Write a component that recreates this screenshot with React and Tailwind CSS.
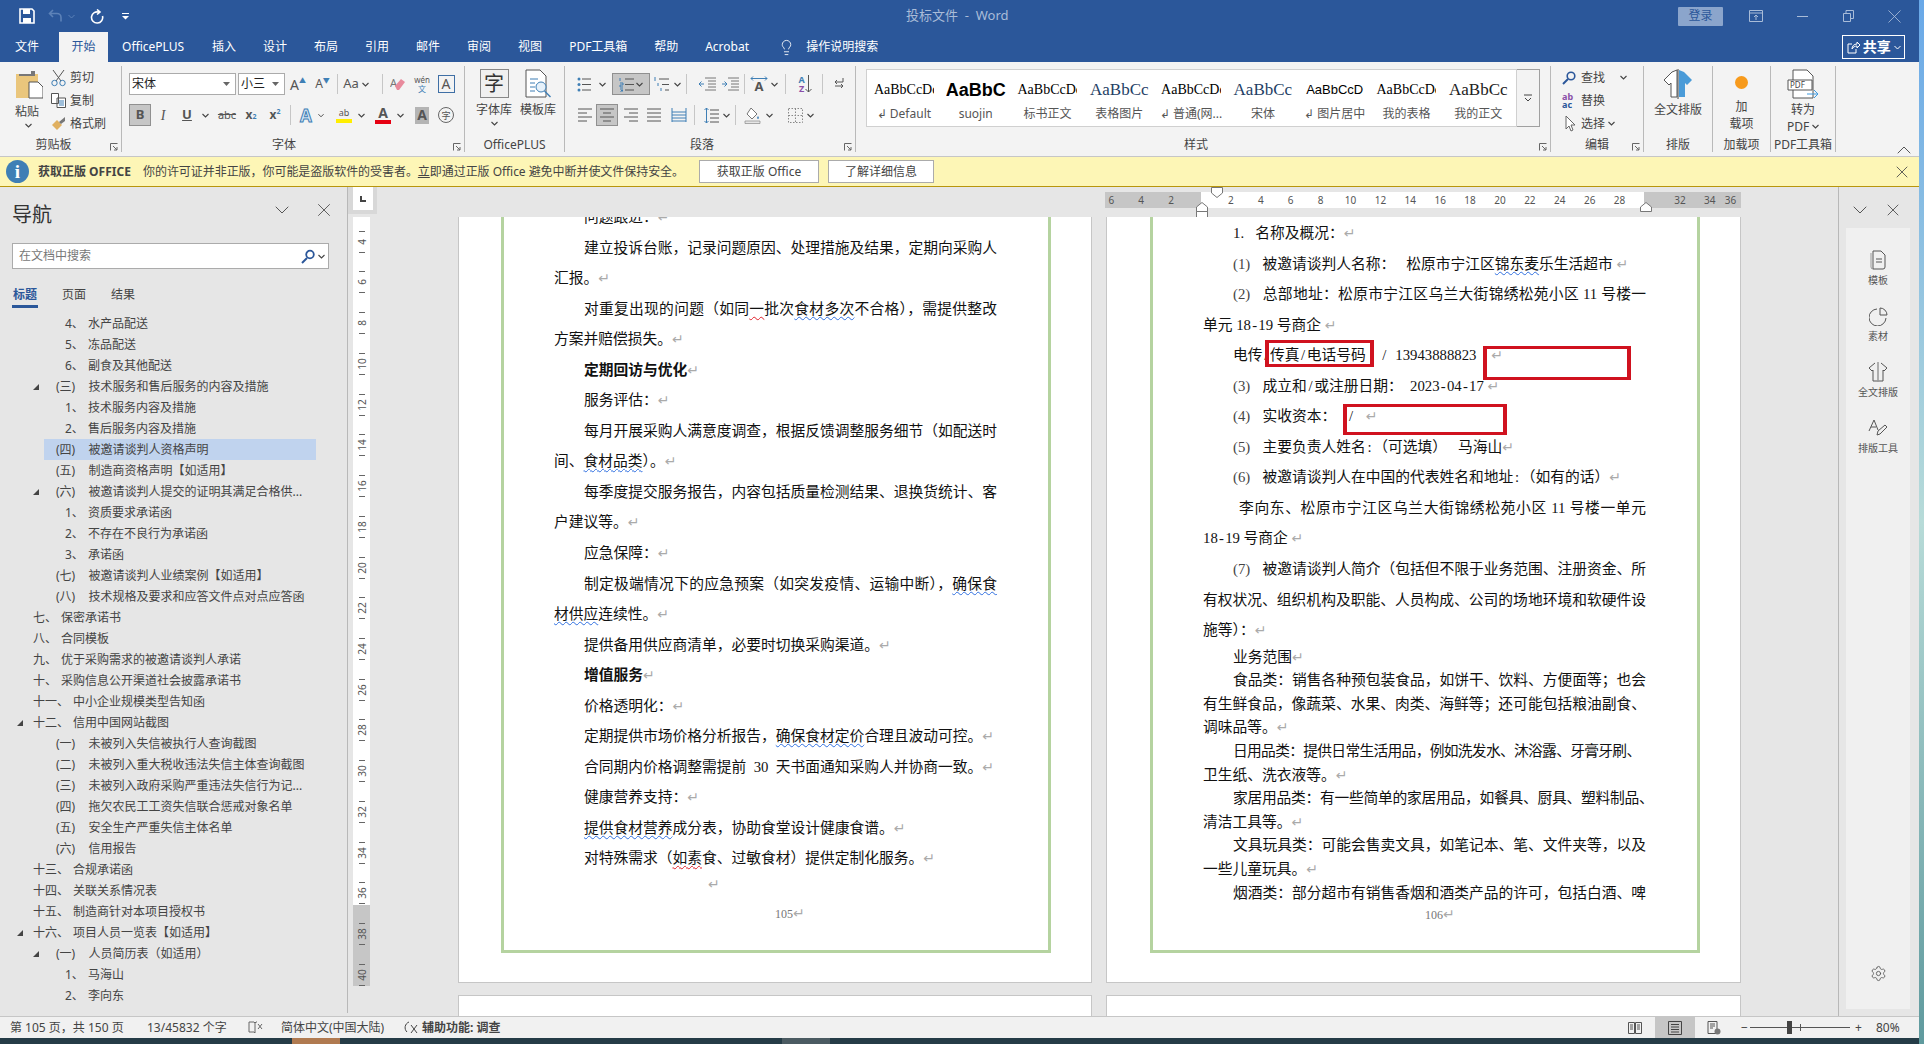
import clsx from "clsx";
import { ChevronDown, ChevronUp, Lightbulb, Settings, X } from "lucide-react";

const Cell = ({ className, children }) => (
  <div className={clsx("flex h-[22px] shrink-0 items-center justify-center", className)}>{children}</div>
);

const Chev = ({ className }) => (
  <svg width="7" height="5" viewBox="0 0 7 5" className={className}>
    <path d="M.5 1l3 3 3-3" fill="none" stroke="#444" strokeWidth="1.1" />
  </svg>
);

const Sep = ({ className }) => <div className={clsx("h-[20px] w-px shrink-0 bg-[#c6c6c6]", className)} />;

const Launcher = () => (
  <svg width="8" height="8" viewBox="0 0 8 8" className="absolute bottom-[1px] right-[3px]">
    <path d="M.5 7.5v-7h7M3 3l4 4M7 4v3H4" fill="none" stroke="#666" />
  </svg>
);

const Lines = ({ kind = "left", color = "#555" }) => {
  const d = {
    left: "M1 2h14M1 6h9M1 10h14M1 14h9",
    center: "M1 2h14M4 6h8M1 10h14M4 14h8",
    right: "M1 2h14M6 6h9M1 10h14M6 14h9",
    just: "M1 2h14M1 6h14M1 10h14M1 14h14",
  }[kind];
  return (
    <svg width="16" height="16" viewBox="0 0 16 16">
      <path d={d} stroke={color} fill="none" />
    </svg>
  );
};

const Group = ({ w, label, labelClass, launcher, children }) => (
  <div className={clsx("relative flex h-full shrink-0 flex-col border-r border-[#b9b9b9]", w)}>
    <div className="h-[72px] overflow-hidden">{children}</div>
    <div className={clsx("h-[14px] whitespace-nowrap text-center text-[12px] leading-[14px] text-[#444]", labelClass)}>{label}</div>
    {launcher && <Launcher />}
  </div>
);

const styles = [
  ["AaBbCcDd", "↲ Default", "font-['Liberation_Serif',serif] text-[14px] text-black"],
  ["AaBbC", "suojin", "font-['Liberation_Sans',sans-serif] text-[18px] font-bold text-black"],
  ["AaBbCcDd", "标书正文", "font-['Liberation_Serif',serif] text-[14px] text-black"],
  ["AaBbCc", "表格图片", "font-['Liberation_Serif',serif] text-[17px] text-[#1f3f66]"],
  ["AaBbCcDd", "↲ 普通(网...", "font-['Liberation_Serif',serif] text-[14px] text-black"],
  ["AaBbCc", "宋体", "font-['Liberation_Serif',serif] text-[17px] text-[#1f3f66]"],
  ["AaBbCcD", "↲ 图片居中", "font-['Liberation_Sans',sans-serif] text-[13px] text-black"],
  ["AaBbCcDd", "我的表格", "font-['Liberation_Serif',serif] text-[14px] text-black"],
  ["AaBbCc", "我的正文", "font-['Liberation_Serif',serif] text-[17px] text-[#222]"],
];

const tabs = ["插入", "设计", "布局", "引用", "邮件", "审阅", "视图", "PDF工具箱", "帮助", "Acrobat"];

const tree = [
  ["a", "4、", "水产品配送"],
  ["a", "5、", "冻品配送"],
  ["a", "6、", "副食及其他配送"],
  ["b", "(三)", "技术服务和售后服务的内容及措施", 1],
  ["a", "1、", "技术服务内容及措施"],
  ["a", "2、", "售后服务内容及措施"],
  ["s", "(四)", "被邀请谈判人资格声明"],
  ["b", "(五)", "制造商资格声明【如适用】"],
  ["b", "(六)", "被邀请谈判人提交的证明其满足合格供...", 1],
  ["a", "1、", "资质要求承诺函"],
  ["a", "2、", "不存在不良行为承诺函"],
  ["a", "3、", "承诺函"],
  ["b", "(七)", "被邀请谈判人业绩案例【如适用】"],
  ["b", "(八)", "技术规格及要求和应答文件点对点应答函"],
  ["c", "七、", "保密承诺书"],
  ["c", "八、", "合同模板"],
  ["c", "九、", "优于采购需求的被邀请谈判人承诺"],
  ["c", "十、", "采购信息公开渠道社会披露承诺书"],
  ["d", "十一、", "中小企业规模类型告知函"],
  ["d", "十二、", "信用中国网站截图", 1],
  ["b", "(一)", "未被列入失信被执行人查询截图"],
  ["b", "(二)", "未被列入重大税收违法失信主体查询截图"],
  ["b", "(三)", "未被列入政府采购严重违法失信行为记..."],
  ["b", "(四)", "拖欠农民工工资失信联合惩戒对象名单"],
  ["b", "(五)", "安全生产严重失信主体名单"],
  ["b", "(六)", "信用报告"],
  ["d", "十三、", "合规承诺函"],
  ["d", "十四、", "关联关系情况表"],
  ["d", "十五、", "制造商针对本项目授权书"],
  ["d", "十六、", "项目人员一览表【如适用】", 1],
  ["b", "(一)", "人员简历表（如适用）", 1],
  ["a", "1、", "马海山"],
  ["a", "2、", "李向东"],
];

const Tri = () => (
  <svg width="6" height="6" viewBox="0 0 6 6">
    <path d="M6 0v6H0z" fill="#444" />
  </svg>
);

const TreeRow = ({ kind, num, text, open }) => {
  if (kind === "s") {
    return (
      <div className="ml-[44px] flex h-[21px] w-[272px] items-center bg-[#c0d3ee] pl-[12px]">
        <span className="w-[32.5px] shrink-0">{num}</span>
        <span>{text}</span>
      </div>
    );
  }
  return (
    <div className="flex h-[21px] items-center whitespace-nowrap">
      <div
        className={clsx(
          "flex shrink-0 items-center",
          kind === "a" && "w-[65px]",
          kind === "b" && "w-[56px] pl-[33px]",
          (kind === "c" || kind === "d") && "w-[33px] pl-[17px]",
        )}
      >
        {open && <Tri />}
      </div>
      <span
        className={clsx(
          "shrink-0",
          kind === "a" && "w-[23px]",
          kind === "b" && "w-[32.5px]",
          kind === "c" && "w-[28px]",
          kind === "d" && "w-[40px]",
        )}
      >
        {num}
      </span>
      <span>{text}</span>
    </div>
  );
};

const Mark = () => <span className="font-['DejaVu_Sans',sans-serif] text-[14px] leading-none text-[#aaaaaa]">↵</span>;
const Blue = ({ children }) => (
  <span className="underline decoration-[#2f6fe0] decoration-wavy decoration-1 underline-offset-2">{children}</span>
);
const Red = ({ children }) => (
  <span className="underline decoration-[#e0202a] decoration-wavy decoration-1 underline-offset-2">{children}</span>
);
// half-width slash or hyphen, as wide as a digit
const S = ({ children }) => <span className="inline-block w-[7.4px] text-center">{children}</span>;
// (1) style item number
const N = ({ children }) => <span className="inline-block w-[29.5px] text-[#444]">{children}</span>;

// h sets the row height: loose rows 30.5, tight rows 23.6
const L = ({ i, full, tight, className, children }) => (
  <div
    className={clsx(
      "w-[443px] whitespace-nowrap",
      tight ? "h-[23.6px] leading-[23.6px]" : "h-[30.55px] leading-[30.55px]",
      i && "pl-[30px]",
      full && "[text-align-last:justify]",
      className,
    )}
  >
    {children}
  </div>
);

const docFont = "font-['Liberation_Serif','Noto_Sans_CJK_SC',serif] text-[14.75px] text-[#111]";

const Page1 = () => (
  <div className="h-[766px] w-[634px] shrink-0 border-x border-b border-[#c6c6c6] bg-white">
    <div className="ml-[42px] h-[736px] w-[550px] overflow-hidden border-x-[3px] border-b-[3px] border-[#b5d3a0] pl-[50px]">
      <div className={clsx("-mt-[15px]", docFont)}>
        <L i>问题跟进：<Mark /></L>
        <L i full>建立投诉台账，记录问题原因、处理措施及结果，定期向采购人</L>
        <L>汇报。<Mark /></L>
        <L i full>对重复出现的问题（如同<Red>一</Red>批次<Blue>食材多次</Blue>不合格），需提供整改</L>
        <L>方案并赔偿损失。<Mark /></L>
        <L i><b>定期回访与优化</b><Mark /></L>
        <L i>服务评估：<Mark /></L>
        <L i full>每月开展采购人满意度调查，根据反馈调整服务细节（如配送时</L>
        <L>间、<Blue>食材品类</Blue>）。<Mark /></L>
        <L i full>每季度提交服务报告，内容包括质量检测结果、退换货统计、客</L>
        <L>户建议等。<Mark /></L>
        <L i>应急保障：<Mark /></L>
        <L i full>制定极端情况下的应急预案（如突发疫情、运输中断），<Blue>确保食</Blue></L>
        <L><Blue>材供应</Blue>连续性。<Mark /></L>
        <L i>提供备用供应商清单，必要时切换采购渠道。<Mark /></L>
        <L i><b>增值服务</b><Mark /></L>
        <L i>价格透明化：<Mark /></L>
        <L i>定期提供市场价格分析报告，<Blue>确保食材定价</Blue>合理且波动可控。<Mark /></L>
        <L i>合同期内价格调整需提前&nbsp; 30&nbsp; 天书面通知采购人并协商一致。<Mark /></L>
        <L i>健康营养支持：<Mark /></L>
        <L i><Blue>提供食材营养</Blue>成分表，协助食堂设计健康食谱。<Mark /></L>
        <L i>对特殊需求（<Red>如素</Red>食、过敏食材）提供定制化服务。<Mark /></L>
        <div className="h-[20px] pl-[154px] leading-[20px]"><Mark /></div>
        <div className="mt-[10px] h-[20px] w-[443px] pl-[221px] text-[12px] leading-[20px] text-[#777]">105<Mark /></div>
      </div>
    </div>
  </div>
);

const RedBox = ({ className }) => (
  <div className={clsx("absolute border-x-4 border-y-[3px] border-[#d0121f]", className)} />
);

const Page2 = () => (
  <div className="relative h-[766px] w-[635px] shrink-0 border-x border-b border-[#c6c6c6] bg-white">
    <div className="ml-[43px] h-[736px] w-[550px] overflow-hidden border-x-[3px] border-b-[3px] border-[#b5d3a0] pl-[50px]">
      <div className={clsx("pt-px", docFont)}>
        <L i>1.&nbsp;&nbsp; 名称及概况：<Mark /></L>
        <L i><N>(1)</N>被邀请谈判人名称：&nbsp;&nbsp; 松原市宁江区<Blue>锦东麦</Blue>乐生活超市 <Mark /></L>
        <L i full><N>(2)</N>总部地址：松原市宁江区乌兰大街锦绣松苑小区 11 号楼一</L>
        <L>单元 18<S>-</S>19 号商企 <Mark /></L>
        <L i>电传<S>/</S>传真<S>/</S>电话号码&nbsp;&nbsp;&nbsp;&nbsp;<S>/</S>&nbsp;&nbsp;13943888823&nbsp;&nbsp;&nbsp; <Mark /></L>
        <L i><N>(3)</N>成立和<S>/</S>或注册日期：&nbsp;&nbsp;2023<S>-</S>04<S>-</S>17 <Mark /></L>
        <L i><N>(4)</N>实收资本：&nbsp;&nbsp;&nbsp;<S>/</S>&nbsp;&nbsp; <Mark /></L>
        <L i><N>(5)</N>主要负责人姓名<S>:</S>（可选填）&nbsp;&nbsp; 马海山<Mark /></L>
        <L i><N>(6)</N>被邀请谈判人在中国的代表姓名和地址<S>:</S>（如有的话）<Mark /></L>
        <L full className="pl-[36px]">李向东、松原市宁江区乌兰大街锦绣松苑小区 11 号楼一单元</L>
        <L>18<S>-</S>19 号商企 <Mark /></L>
        <L i full><N>(7)</N>被邀请谈判人简介（包括但不限于业务范围、注册资金、所</L>
        <L full>有权状况、组织机构及职能、人员构成、公司的场地环境和软硬件设</L>
        <L>施等）：<Mark /></L>
        <L i tight>业务范围<Mark /></L>
        <L i tight full>食品类：销售各种预包装食品，如饼干、饮料、方便面等；也会</L>
        <L tight full>有生鲜食品，像蔬菜、水果、肉类、海鲜等；还可能包括粮油副食、</L>
        <L tight>调味品等。<Mark /></L>
        <L i tight className="tracking-[-0.7px]">日用品类：提供日常生活用品，例如洗发水、沐浴露、牙膏牙刷、</L>
        <L tight>卫生纸、洗衣液等。<Mark /></L>
        <L i tight className="tracking-[-0.25px]">家居用品类：有一些简单的家居用品，如餐具、厨具、塑料制品、</L>
        <L tight>清洁工具等。<Mark /></L>
        <L i tight full>文具玩具类：可能会售卖文具，如笔记本、笔、文件夹等，以及</L>
        <L tight>一些儿童玩具。<Mark /></L>
        <L i tight full>烟酒类：部分超市有销售香烟和酒类产品的许可，包括白酒、啤</L>
        <div className="mt-[1px] h-[18px] w-[443px] pl-[222px] text-[12px] leading-[18px] text-[#777]">106<Mark /></div>
      </div>
    </div>
    <RedBox className="left-[158px] top-[123px] h-[27px] w-[109px]" />
    <RedBox className="left-[376px] top-[129px] h-[34px] w-[148px]" />
    <RedBox className="left-[236px] top-[187px] h-[31px] w-[164px]" />
  </div>
);

const rulerNums = [4, 6, 8, 10, 12, 14, 16, 18, 20, 22, 24, 26, 28, 30, 32, 34, 36, 38, 40];

const VRuler = () => (
  <div className="relative ml-[5px] h-[769px] w-[17px] bg-white pt-[4.3px]">
    <div className="absolute bottom-0 left-0 h-[81px] w-full bg-[#c6c6c6]" />
    {rulerNums.map((n) => (
      <div key={n} className="relative flex h-[40.74px] flex-col items-center justify-center gap-[3px]">
        <div className="h-px w-[6px] bg-[#666]" />
        <span className="flex h-[14px] -rotate-90 items-center justify-center whitespace-nowrap text-[10px] leading-none text-[#555]">{n}</span>
        <div className="h-px w-[6px] bg-[#666]" />
      </div>
    ))}
  </div>
);

const RulerNum = ({ n }) => <div className="w-[29.9px] shrink-0 text-center">{n}</div>;

const HRuler = () => (
  <div className="relative h-[30px] bg-[#e6e6e6] pl-[647px] pt-[5px]">
    <div className="flex h-[16px] w-[636px] text-[10px] leading-[16px] text-[#555]">
      <div className="flex w-[96px] shrink-0 justify-end bg-[#c6c6c6] pr-[15px]">
        <RulerNum n={6} />
        <RulerNum n={4} />
        <RulerNum n={2} />
      </div>
      <div className="flex w-[443px] shrink-0 bg-white pl-[15px]">
        {[2, 4, 6, 8, 10, 12, 14, 16, 18, 20, 22, 24, 26, 28].map((n) => (
          <RulerNum key={n} n={n} />
        ))}
      </div>
      <div className="flex w-[97px] shrink-0 overflow-hidden bg-[#c6c6c6] pl-[21px]">
        <RulerNum n={32} />
        <RulerNum n={34} />
        <div className="shrink-0">36</div>
      </div>
    </div>
    <svg width="12" height="16" viewBox="0 0 12 16" className="absolute left-[738px] top-[15px]">
      <path d="M.5 9.5V5L6 .5 11.5 5v4.5zM.5 9.5h11v6H.5z" fill="#fff" stroke="#777" />
    </svg>
    <svg width="12" height="11" viewBox="0 0 12 11" className="absolute left-[753px] top-0">
      <path d="M.5.5h11V6L6 10.5.5 6z" fill="#fff" stroke="#777" />
    </svg>
    <svg width="12" height="10" viewBox="0 0 12 10" className="absolute left-[1182px] top-[15px]">
      <path d="M.5 9.5V5L6 .5 11.5 5v4.5z" fill="#fff" stroke="#777" />
    </svg>
  </div>
);

const TitleBar = () => (
  <div className="flex h-[32px] items-center text-[#a9bcd8]">
    <svg width="16" height="16" viewBox="0 0 16 16" className="ml-[19px]">
      <path d="M1 1h12l2 2v12H1z" fill="none" stroke="#fff" strokeWidth="1.6" />
      <path d="M4 1h7v5H4zM4 10h8v5H4z" fill="#fff" />
    </svg>
    <svg width="16" height="14" viewBox="0 0 16 14" className="ml-[13px]">
      <path d="M5 1L1.5 4.5 5 8M2 4.5h7a4 4 0 014 4v4" fill="none" stroke="#5d82b8" strokeWidth="1.6" />
    </svg>
    <svg width="7" height="5" viewBox="0 0 7 5" className="ml-[4px]">
      <path d="M.5 1l3 3 3-3" fill="none" stroke="#5d82b8" />
    </svg>
    <svg width="15" height="15" viewBox="0 0 15 15" className="ml-[15px]">
      <path d="M7 .5l3 2.5-3 2.5M9 3.2A5.6 5.6 0 1012.5 7" fill="none" stroke="#fff" strokeWidth="1.6" />
    </svg>
    <svg width="7" height="8" viewBox="0 0 7 8" className="ml-[17px]">
      <path d="M0 1h7v1H0zM0 4h7L3.5 7.5z" fill="#fff" />
    </svg>
    <div className="ml-[777px] w-[101px] whitespace-nowrap text-[13px]">投标文件&nbsp; -&nbsp; Word</div>
    <div className="ml-[671px] flex h-[19px] w-[45px] items-center justify-center rounded-[1px] bg-[#8ba5cc] text-[12px] text-[#2b579a]">
      登录
    </div>
    <svg width="14" height="12" viewBox="0 0 14 12" className="ml-[26px]">
      <path d="M.5.5h13v11H.5zM.5 3h13M7 10V5M5 7l2-2 2 2" fill="none" stroke="#a9bcd8" />
    </svg>
    <div className="ml-[34px] h-px w-[11px] bg-[#a9bcd8]" />
    <svg width="11" height="12" viewBox="0 0 11 12" className="ml-[35px]">
      <path d="M.5 3.5h7v8h-7zM3 3.5V.5h7.5v8H7.5" fill="none" stroke="#a9bcd8" />
    </svg>
    <X size={23} strokeWidth={0.9} className="ml-[29px] text-[#a9bcd8]" />
  </div>
);

const TabsRow = () => (
  <div className="flex h-[30px] items-stretch whitespace-nowrap text-[12px] leading-[30px] text-white">
    <div className="ml-[15px]">文件</div>
    <div className="ml-[20px] w-[49px] bg-[#f3f3f3] text-center text-[#2b579a]">开始</div>
    <div className="ml-[14px] w-[63px]">OfficePLUS</div>
    {tabs.map((t) => (
      <div key={t} className={clsx("ml-[27px]", t === "PDF工具箱" && "w-[58px]", t === "Acrobat" && "w-[46px]")}>
        {t}
      </div>
    ))}
    <Lightbulb size={17} strokeWidth={1.2} className="ml-[27px] mt-[7px]" />
    <div className="ml-[11px]">操作说明搜索</div>
    <div className="ml-[964px] mt-[3px] flex h-[24px] w-[63px] items-center justify-center gap-[3px] border border-white font-bold leading-none">
      <svg width="13" height="13" viewBox="0 0 13 13">
        <path d="M5 3H1v9h8V8M5 8c0-3 2-5 5-5V1l3 3-3 3V5C8 5 6 6 5 8z" fill="none" stroke="#fff" />
      </svg>
      <span className="text-[14px]">共享</span>
      <svg width="7" height="5" viewBox="0 0 7 5">
        <path d="M.5 1l3 3 3-3" fill="none" stroke="#fff" />
      </svg>
    </div>
  </div>
);

const SmallLabel = ({ className, children }) => (
  <div className={clsx("flex h-[23px] items-center text-[12px] text-[#444]", className)}>{children}</div>
);

const ClipboardGroup = () => (
  <Group w="w-[122px]" label="剪贴板" labelClass="pr-[14px]" launcher>
    <div className="flex">
      <div className="ml-[15px] flex w-[30px] flex-col items-start pt-[4px]">
        <svg width="28" height="29" viewBox="0 0 28 29">
          <path d="M1 4h22v24H1z" fill="#eac67c" />
          <path d="M8 4h8V1h4v5H4V4z" fill="#777" />
          <path d="M14 12h9l5 5v11H14z" fill="#fff" stroke="#555" />
        </svg>
        <div className="mt-[4px] whitespace-nowrap text-[12px] leading-[18px] text-[#444]">粘贴</div>
        <Chev className="ml-[10px] mt-[2px]" />
      </div>
      <div className="ml-[6px] flex flex-col pt-[0px]">
        <SmallLabel>
          <svg width="15" height="18" viewBox="0 0 15 18" className="mr-[4px]">
            <path d="M2 1l8 11M13 1L5 12" stroke="#555" fill="none" />
            <circle cx="3.5" cy="14" r="2.7" fill="none" stroke="#3f7fb5" />
            <circle cx="11.5" cy="14" r="2.7" fill="none" stroke="#3f7fb5" />
          </svg>
          剪切
        </SmallLabel>
        <SmallLabel>
          <svg width="15" height="15" viewBox="0 0 15 15" className="mr-[4px]">
            <path d="M.5.5h7v10h-7zM6 5h8.5v9.5H6z" fill="#fff" stroke="#555" />
            <path d="M8 8h5M8 10h5M8 12h5" stroke="#3f7fb5" />
          </svg>
          复制
        </SmallLabel>
        <SmallLabel>
          <svg width="15" height="15" viewBox="0 0 15 15" className="mr-[4px]">
            <path d="M1 9l5-5 5 5-5 5z" fill="#e0b060" />
            <path d="M8 6l6-5 0 4-4 3z" fill="#777" />
          </svg>
          格式刷
        </SmallLabel>
      </div>
    </div>
  </Group>
);

const FontGroup = () => (
  <Group w="w-[343px]" label="字体" labelClass="pr-[18px]" launcher>
    <div className="pl-[7px] pt-[7px] text-[#555]">
      <div className="flex h-[22px] items-center">
        <div className="flex h-[22px] w-[107px] shrink-0 items-center justify-between border border-[#ababab] bg-white pl-[2px] pr-[5px] text-[12px] text-[#222]">
          宋体
          <svg width="7" height="4" viewBox="0 0 7 4"><path d="M0 0h7L3.5 4z" fill="#666" /></svg>
        </div>
        <div className="ml-[2px] flex h-[22px] w-[47px] shrink-0 items-center justify-between border border-[#ababab] bg-white pl-[2px] pr-[5px] text-[12px] text-[#222]">
          小三
          <svg width="7" height="4" viewBox="0 0 7 4"><path d="M0 0h7L3.5 4z" fill="#666" /></svg>
        </div>
        <Cell className="ml-[1px] w-[24px] text-[14px]">A<sup className="text-[7px] text-[#3f7fb5]">▲</sup></Cell>
        <Cell className="w-[25px] text-[12px]">A<sup className="text-[7px] text-[#3f7fb5]">▼</sup></Cell>
        <Sep className="ml-[2px]" />
        <Cell className="w-[36px] gap-[3px] text-[13px]">Aa<Chev /></Cell>
        <Sep className="ml-[8px]" />
        <Cell className="w-[30px]">
          <svg width="16" height="16" viewBox="0 0 16 16">
            <text x="0" y="11" fontSize="11" fill="#777">A</text>
            <path d="M5 10l6-7 4 3-6 8H7z" fill="#e88a9c" />
          </svg>
        </Cell>
        <Cell className="w-[18px] flex-col text-[8px] leading-[9px]">
          <span>wén</span>
          <span className="text-[#3f7fb5]">文</span>
        </Cell>
        <Cell className="w-[30px]">
          <div className="flex h-[18px] w-[17px] items-center justify-center border border-[#3f6fa5] text-[14px] leading-none">A</div>
        </Cell>
      </div>
      <div className="mt-[9px] flex h-[22px] items-center">
        <Cell className="w-[22px] border border-[#909090] bg-[#c6c6c6] text-[13px] font-bold">B</Cell>
        <Cell className="w-[24px] font-['Liberation_Serif',serif] text-[14px] italic">I</Cell>
        <Cell className="w-[24px] text-[13px] font-bold underline">U</Cell>
        <Cell className="w-[12px]"><Chev /></Cell>
        <Cell className="ml-[4px] w-[24px] text-[11px] line-through">abc</Cell>
        <Cell className="w-[24px] text-[12px] font-bold">x<sub className="text-[7px] text-[#3f7fb5]">2</sub></Cell>
        <Cell className="w-[24px] text-[12px] font-bold">x<sup className="text-[7px] text-[#3f7fb5]">2</sup></Cell>
        <Sep className="ml-[3px]" />
        <Cell className="ml-[3px] w-[24px] text-[17px] font-bold leading-none text-[#d6e6f5] [-webkit-text-stroke:1px_#3f7fb5]">A</Cell>
        <Cell className="w-[6px]"><Chev /></Cell>
        <Cell className="ml-[8px] w-[24px]">
          <div className="flex w-[16px] flex-col text-center text-[9px] leading-[12px]">
            ab
            <div className="h-[4px] bg-[#ffee00]" />
          </div>
        </Cell>
        <Cell className="w-[10px]"><Chev /></Cell>
        <Cell className="ml-[5px] w-[24px]">
          <div className="flex w-[16px] flex-col text-center text-[14px] font-bold leading-[14px]">
            A
            <div className="h-[4px] bg-[#e60012]" />
          </div>
        </Cell>
        <Cell className="w-[10px]"><Chev /></Cell>
        <Cell className="ml-[5px] w-[24px]">
          <div className="flex h-[17px] w-[14px] items-center justify-center bg-[#b4b4b4] text-[14px] font-bold leading-none">A</div>
        </Cell>
        <Cell className="w-[24px]">
          <div className="flex h-[16px] w-[16px] items-center justify-center rounded-full border border-[#666] text-[9px] leading-none">字</div>
        </Cell>
      </div>
    </div>
  </Group>
);

const OfficePlusGroup = () => (
  <Group w="w-[100px]" label="OfficePLUS">
    <div className="flex pt-[3px]">
      <div className="ml-[10px] flex w-[38px] flex-col items-center">
        <div className="flex h-[29px] w-[29px] items-center justify-center border border-[#888] bg-[#f0f0f0] text-[20px] leading-none text-[#333]">字</div>
        <div className="mt-[3px] whitespace-nowrap text-[12px] leading-[18px] text-[#444]">字体库</div>
        <Chev className="mt-[2px]" />
      </div>
      <div className="ml-[6px] flex w-[38px] flex-col items-center">
        <svg width="28" height="29" viewBox="0 0 28 29">
          <path d="M2 1h14l6 6v21H2z" fill="#fff" stroke="#555" />
          <path d="M6 10h8M6 14h5M6 18h5M6 22h5" stroke="#3f7fb5" />
          <circle cx="17" cy="18" r="5" fill="#e6f1fa" stroke="#3f7fb5" />
          <path d="M20.5 22l6 6" stroke="#3f7fb5" strokeWidth="1.4" />
        </svg>
        <div className="mt-[3px] whitespace-nowrap text-[12px] leading-[18px] text-[#444]">模板库</div>
      </div>
    </div>
  </Group>
);

const ParagraphGroup = () => (
  <Group w="w-[291px]" label="段落" labelClass="pr-[16px]" launcher>
    <div className="pl-[11px] pt-[7px]">
      <div className="flex h-[22px] items-center">
        <Cell className="w-[16px]">
          <svg width="15" height="15" viewBox="0 0 15 15">
            <path d="M5 2h9M5 7.5h9M5 13h9" stroke="#555" />
            <circle cx="2" cy="2" r="1.5" fill="#3f7fb5" /><circle cx="2" cy="7.5" r="1.5" fill="#3f7fb5" /><circle cx="2" cy="13" r="1.5" fill="#3f7fb5" />
          </svg>
        </Cell>
        <Cell className="ml-[5px] w-[10px]"><Chev /></Cell>
        <Cell className="ml-[5px] w-[38px] gap-[2px] border border-[#909090] bg-[#c6c6c6]">
          <svg width="15" height="15" viewBox="0 0 15 15">
            <path d="M6 2h9M6 7.5h9M6 13h9" stroke="#555" />
            <path d="M1 1v3M1 6h3v2H1v2h3M1 12h3M2 13.5h2M1 15h3" stroke="#3f7fb5" fill="none" />
          </svg>
          <Chev />
        </Cell>
        <Cell className="ml-[2px] w-[20px]">
          <svg width="16" height="15" viewBox="0 0 16 15">
            <path d="M5 2h10M8 7.5h7M11 13h4" stroke="#555" />
            <path d="M1 0v4M4 6v3M7 11v3" stroke="#3f7fb5" />
          </svg>
        </Cell>
        <Cell className="w-[10px]"><Chev /></Cell>
        <Sep className="ml-[4px]" />
        <Cell className="ml-[10px] w-[20px]">
          <svg width="17" height="14" viewBox="0 0 17 14">
            <path d="M6 1h11M9 4h8M9 7h8M9 10h8M6 13h11" stroke="#777" />
            <path d="M5 7H0M2.5 4.5L0 7l2.5 2.5" stroke="#3f7fb5" fill="none" />
          </svg>
        </Cell>
        <Cell className="ml-[3px] w-[20px]">
          <svg width="17" height="14" viewBox="0 0 17 14">
            <path d="M6 1h11M9 4h8M9 7h8M9 10h8M6 13h11" stroke="#777" />
            <path d="M0 7h5M2.5 4.5L5 7 2.5 9.5" stroke="#3f7fb5" fill="none" />
          </svg>
        </Cell>
        <Sep className="ml-[4px]" />
        <Cell className="ml-[4px] w-[20px] text-[15px] font-bold leading-none text-[#555]">
          <div className="flex flex-col items-center">
            <svg width="18" height="5" viewBox="0 0 18 5"><path d="M1 2.5h16M3 .5L1 2.5l2 2M15 .5l2 2-2 2" stroke="#3f7fb5" fill="none" /></svg>
            <span className="-mt-[1px] text-[13px]">A</span>
          </div>
        </Cell>
        <Cell className="w-[10px]"><Chev /></Cell>
        <Sep className="ml-[6px]" />
        <Cell className="ml-[8px] w-[22px]">
          <div className="flex flex-col text-center text-[9px] font-bold leading-[9px]">
            <span className="text-[#3f7fb5]">A</span>
            <span className="text-[#8a4fa8]">Z</span>
          </div>
          <svg width="7" height="18" viewBox="0 0 7 18"><path d="M3.5 0v17M.5 14l3 3 3-3" stroke="#555" fill="none" /></svg>
        </Cell>
        <Sep className="ml-[6px]" />
        <Cell className="ml-[4px] w-[24px]">
          <svg width="14" height="16" viewBox="0 0 14 16">
            <path d="M11 2v4H3M5 4L3 6l2 2M3 10h8M9 8l2 2-2 2" stroke="#555" fill="none" />
          </svg>
        </Cell>
      </div>
      <div className="mt-[9px] flex h-[22px] items-center">
        <Cell className="w-[18px]"><Lines kind="left" /></Cell>
        <Cell className="ml-[2px] w-[22px] border border-[#909090] bg-[#c6c6c6]"><Lines kind="center" /></Cell>
        <Cell className="ml-[2px] w-[22px]"><Lines kind="right" /></Cell>
        <Cell className="ml-[1px] w-[22px]"><Lines kind="just" /></Cell>
        <Cell className="ml-[3px] w-[22px]">
          <svg width="16" height="16" viewBox="0 0 16 16">
            <path d="M1 1v14M15 1v14M1 5h14M1 8h14M1 11h14M1 14h14" stroke="#3f7fb5" fill="none" />
          </svg>
        </Cell>
        <Sep className="ml-[4px]" />
        <Cell className="ml-[6px] w-[20px]">
          <svg width="15" height="17" viewBox="0 0 15 17">
            <path d="M6 3h9M6 7h9M6 11h9M6 15h9" stroke="#555" />
            <path d="M2.5 1v15M.5 3l2-2 2 2M.5 14l2 2 2-2" stroke="#3f7fb5" fill="none" />
          </svg>
        </Cell>
        <Cell className="w-[10px]"><Chev /></Cell>
        <Sep className="ml-[4px]" />
        <Cell className="ml-[6px] w-[20px]">
          <svg width="17" height="17" viewBox="0 0 17 17">
            <path d="M7 1l6 6-5 5-5-5z" fill="#fff" stroke="#777" />
            <path d="M14 9c1 1.5 1.5 2.5 0 3-1.500-.5-1-1.500 0-3z" fill="#3f7fb5" />
            <path d="M1 14h15v2.500H1z" fill="#e6e6e6" stroke="#888" strokeWidth=".7" />
          </svg>
        </Cell>
        <Cell className="ml-[2px] w-[10px]"><Chev /></Cell>
        <Cell className="ml-[11px] w-[20px]">
          <svg width="15" height="15" viewBox="0 0 15 15">
            <path d="M.5.5h14v14H.5zM.5 7.500h14M7.500.5v14" stroke="#888" strokeDasharray="1.500 1.500" fill="none" />
          </svg>
        </Cell>
        <Cell className="w-[10px]"><Chev /></Cell>
      </div>
    </div>
  </Group>
);

const StylesGroup = () => (
  <Group w="w-[695px]" label="样式" labelClass="pr-[14px]" launcher>
    <div className="flex pl-[10px] pt-[3px]">
      <div className="flex h-[58px] w-[651px] overflow-hidden border border-[#d0d0d0] bg-white pl-px">
        {styles.map(([preview, label, cls]) => (
          <div key={label} className="flex w-[71.8px] shrink-0 flex-col items-center">
            <div className={clsx("mt-[6px] h-[28px] w-[60px] overflow-hidden whitespace-nowrap text-center leading-[28px]", cls)}>
              {preview}
            </div>
            <div className="mt-[2px] whitespace-nowrap text-[12px] leading-[16px] text-[#555]">{label}</div>
          </div>
        ))}
      </div>
      <div className="flex h-[58px] w-[23px] shrink-0 items-center justify-center border-y border-r border-[#a0a0a0]">
        <svg width="8" height="8" viewBox="0 0 8 8"><path d="M0 1h8M1 4l3 3 3-3" stroke="#444" fill="none" /></svg>
      </div>
    </div>
  </Group>
);

const EditGroup = () => (
  <Group w="w-[93px]" label="编辑" launcher>
    <div className="flex flex-col pl-[11px] pt-[0px]">
      <SmallLabel>
        <svg width="14" height="14" viewBox="0 0 14 14" className="mr-[5px]">
          <circle cx="9" cy="5" r="3.800" fill="none" stroke="#2b579a" strokeWidth="1.600" />
          <path d="M6 8l-5 5" stroke="#2b579a" strokeWidth="2" />
        </svg>
        查找
        <Chev className="ml-[15px]" />
      </SmallLabel>
      <SmallLabel>
        <span className="mr-[3px] flex w-[16px] flex-col text-[9px] font-bold leading-[8px]">
          <span className="text-[#8a4fa8]">ab</span>
          <span className="text-[#2b579a]">ac</span>
        </span>
        替换
      </SmallLabel>
      <SmallLabel>
        <svg width="13" height="17" viewBox="0 0 13 17" className="ml-[3px] mr-[3px]">
          <path d="M1 1v13l3-3 2 5 2-1-2-5h4z" fill="#fff" stroke="#666" />
        </svg>
        选择
        <Chev className="ml-[3px]" />
      </SmallLabel>
    </div>
  </Group>
);

const PaibanGroup = () => (
  <Group w="w-[69px]" label="排版">
    <div className="flex flex-col items-center pt-[3px]">
      <svg width="30" height="30" viewBox="0 0 30 30">
        <path d="M14 1L9 3 1 11l5 5 2-2v14h6z" fill="#fff" stroke="#555" />
        <path d="M16 1l5 2 8 8-5 5-2-2v14h-6z" fill="#4a9bd8" />
        <path d="M15 0v30" stroke="#444" />
      </svg>
      <div className="mt-[2px] whitespace-nowrap text-[12px] leading-[18px] text-[#444]">全文排版</div>
    </div>
  </Group>
);

const AddinGroup = () => (
  <Group w="w-[58px]" label="加载项">
    <div className="flex flex-col items-center pt-[10px] text-[12px] leading-[17px] text-[#444]">
      <div className="h-[13px] w-[13px] rounded-full bg-[#f79a1c]" />
      <div className="mt-[9px]">加</div>
      <div>载项</div>
    </div>
  </Group>
);

const PdfGroup = () => (
  <Group w="w-[65px]" label="PDF工具箱">
    <div className="flex flex-col items-center pt-[3px] text-[12px] leading-[17px] text-[#444]">
      <svg width="32" height="31" viewBox="0 0 32 31">
        <path d="M6 1h14l6 6v22H6z" fill="#fff" stroke="#555" />
        <path d="M1 11h24v10H1z" fill="#fff" stroke="#555" />
        <path d="M20 25h11M27 21l4 4-4 4" stroke="#3f9be0" fill="none" />
        <text x="3" y="19" fontSize="8" fill="#444">PDF</text>
      </svg>
      <div className="mt-[1px]">转为</div>
      <div className="flex items-center gap-[3px]">PDF<Chev /></div>
    </div>
  </Group>
);

const Ribbon = () => (
  <div className="relative flex h-[94px] items-stretch bg-[#f3f3f3] py-[4px]">
    <ClipboardGroup />
    <FontGroup />
    <OfficePlusGroup />
    <ParagraphGroup />
    <StylesGroup />
    <EditGroup />
    <PaibanGroup />
    <AddinGroup />
    <PdfGroup />
    <ChevronUp size={24} strokeWidth={0.9} className="absolute -bottom-[6px] right-[3px] text-[#444]" />
  </div>
);

const InfoBar = () => (
  <div className="flex h-[30px] items-center whitespace-nowrap border-b border-[#b8960c] bg-[#fdf6b6] text-[12px] text-[#444]">
    <div className="ml-[6px] flex h-[23px] w-[23px] items-center justify-center rounded-full bg-[#3f7fb5] font-['Liberation_Serif',serif] text-[19px] font-bold leading-none text-white">
      i
    </div>
    <b className="ml-[9px] w-[96px]">获取正版 OFFICE</b>
    <span className="ml-[9px] w-[542px] tracking-[-0.05px]">
      你的许可证并非正版，你可能是盗版软件的受害者。<span className="underline">立</span>即通过正版 Office 避免中断并使文件保持安全。
    </span>
    <div className="ml-[14px] flex h-[23px] w-[120px] items-center justify-center border border-[#ababab] bg-white">获取正版 Office</div>
    <div className="ml-[9px] flex h-[23px] w-[106px] items-center justify-center border border-[#ababab] bg-white">了解详细信息</div>
    <X size={20} strokeWidth={1} className="ml-[958px] text-[#444]" />
  </div>
);

const NavPane = () => (
  <div className="h-[826px] w-[348px] shrink-0 overflow-hidden border-r border-[#b8b8b8] text-[12px] text-[#444]">
    <div className="flex h-[56px] items-center pl-[12px] pt-[0px]">
      <span className="w-[258px] text-[20px] leading-none text-[#333]">导航</span>
      <ChevronDown size={24} strokeWidth={0.9} className="-mt-[10px] text-[#444]" />
      <X size={22} strokeWidth={0.9} className="-mt-[10px] ml-[19px] text-[#444]" />
    </div>
    <div className="ml-[12px] flex h-[26px] w-[317px] items-center border border-[#ababab] bg-white pl-[6px] text-[#777]">
      <span className="flex-1">在文档中搜索</span>
      <svg width="14" height="15" viewBox="0 0 14 15">
        <circle cx="9" cy="5.500" r="3.800" fill="none" stroke="#2b579a" strokeWidth="1.800" />
        <path d="M6 9l-5 5" stroke="#2b579a" strokeWidth="2" />
      </svg>
      <Chev className="ml-[3px] mr-[3px]" />
    </div>
    <div className="mt-[18px] flex h-[15px] items-center pl-[13px] leading-none">
      <span className="w-[49px] font-bold text-[#2b579a]">标题</span>
      <span className="w-[49px]">页面</span>
      <span>结果</span>
    </div>
    <div className="ml-[12px] mt-[3px] h-[3px] w-[26px] bg-[#2b579a]" />
    <div className="pt-[5px]">
      {tree.map(([kind, num, text, open]) => (
        <TreeRow key={num + text} kind={kind} num={num} text={text} open={open} />
      ))}
    </div>
  </div>
);

const PanelItem = ({ label, children }) => (
  <div className="flex h-[56px] flex-col items-center text-[10px] leading-[14px] text-[#555]">
    <div className="flex h-[24px] items-center">{children}</div>
    <div className="mt-[1px] whitespace-nowrap">{label}</div>
  </div>
);

const RightPanel = () => (
  <div className="h-[829px] w-[81px] shrink-0 border-l border-[#b8b8b8]">
    <div className="flex h-[41px] items-center pl-[9px] pt-[5px] text-[#444]">
      <ChevronDown size={24} strokeWidth={0.9} />
      <X size={20} strokeWidth={1} className="ml-[11px]" />
    </div>
    <div className="ml-[7px] flex h-[781px] w-[64px] flex-col justify-between bg-[#f0f0f0] pb-[27px] pt-[20px]">
      <div>
        <PanelItem label="模板">
          <svg width="16" height="20" viewBox="0 0 16 20">
            <path d="M3 1h8l4 4v12a2 2 0 01-2 2H3z" fill="none" stroke="#555" />
            <path d="M1 3v14a2 2 0 002 2" fill="none" stroke="#999" />
            <path d="M6 9h6M6 12h6" stroke="#555" />
          </svg>
        </PanelItem>
        <PanelItem label="素材">
          <svg width="19" height="19" viewBox="0 0 19 19">
            <path d="M8 2a8.500 8.500 0 109 9M11 1a7 7 0 017 7h-7z" fill="none" stroke="#555" />
          </svg>
        </PanelItem>
        <PanelItem label="全文排版">
          <svg width="20" height="20" viewBox="0 0 20 20">
            <path d="M7 1L1 6l3 3 1-1v11h10V8l1 1 3-3-6-5" fill="none" stroke="#555" />
            <path d="M10 0v20" stroke="#999" strokeWidth="1.500" />
          </svg>
        </PanelItem>
        <PanelItem label="排版工具">
          <svg width="20" height="18" viewBox="0 0 20 18">
            <path d="M1 12L6 1l4 10M3 8h5" fill="none" stroke="#555" />
            <path d="M9 16l1-4 7-6 2 2-7 7z" fill="none" stroke="#555" />
          </svg>
        </PanelItem>
      </div>
      <div className="flex justify-center">
        <Settings size={17} strokeWidth={1.2} className="text-[#555]" />
      </div>
    </div>
  </div>
);

const Body = () => (
  <div className="flex h-[829px] overflow-hidden bg-[#e6e6e6]">
    <NavPane />
    <div className="w-[110px] shrink-0">
      <div className="flex h-[27px] w-[29px] items-start justify-center bg-[#d8d8d8] pb-[4px]">
        <div className="flex h-[23px] w-[20px] items-center justify-center bg-white">
          <svg width="6" height="6" viewBox="0 0 6 6"><path d="M0 0h2v4h4v2H0z" fill="#444" /></svg>
        </div>
      </div>
      <div className="mt-[3px]">
        <VRuler />
      </div>
    </div>
    <div className="w-[1380px] shrink-0 overflow-hidden">
      <HRuler />
      <div className="flex gap-[14px]">
        <div className="flex flex-col gap-[12px]">
          <Page1 />
          <div className="h-[40px] w-[634px] border-x border-t border-[#c6c6c6] bg-white" />
        </div>
        <div className="flex flex-col gap-[12px]">
          <Page2 />
          <div className="h-[40px] w-[635px] border-x border-t border-[#c6c6c6] bg-white" />
        </div>
      </div>
    </div>
    <RightPanel />
  </div>
);

const StatusBar = () => (
  <div className="flex h-[22px] items-center whitespace-nowrap border-t border-[#c6c6c6] bg-[#f1f1f1] text-[12px] text-[#444]">
    <span className="ml-[10px] w-[118px]">第 105 页，共 150 页</span>
    <span className="ml-[19px] w-[82px]">13/45832 个字</span>
    <svg width="15" height="13" viewBox="0 0 15 13" className="ml-[19px]">
      <path d="M1 1h5l1 1v10L6 11H1zM7 2l1-1h1" fill="none" stroke="#666" />
      <path d="M10 3l4 5M14 3l-4 5" stroke="#666" />
    </svg>
    <span className="ml-[18px] w-[103px]">简体中文(中国大陆)</span>
    <svg width="14" height="14" viewBox="0 0 14 14" className="ml-[20px]">
      <path d="M5 1a6 6 0 00-2 10M7 4l6 8M13 4l-6 8" fill="none" stroke="#444" />
    </svg>
    <b className="ml-[4px] w-[80px]">辅助功能: 调查</b>
    <svg width="14" height="14" viewBox="0 0 14 14" className="ml-[1126px]">
      <path d="M.5 1.500h6v11h-6zM7.500 1.500h6v11h-6zM2 4h3M2 6h3M2 8h3M9 4h3M9 6h3M9 8h3" fill="none" stroke="#555" />
    </svg>
    <div className="ml-[13px] flex h-[21px] w-[40px] items-center justify-center bg-[#c6c6c6]">
      <svg width="14" height="14" viewBox="0 0 14 14">
        <path d="M.5.5h13v13H.5zM3 3.500h8M3 6h8M3 8.500h8M3 11h8" fill="none" stroke="#444" />
      </svg>
    </div>
    <svg width="14" height="14" viewBox="0 0 14 14" className="ml-[12px]">
      <path d="M1 .5h9v12H1zM3 3h5M3 5h5M3 7h3" fill="none" stroke="#555" />
      <circle cx="10.500" cy="10.500" r="3" fill="#777" />
    </svg>
    <span className="ml-[20px] w-[6px] leading-none">−</span>
    <div className="relative ml-[3px] h-px w-[100px] bg-[#555]">
      <div className="absolute -top-[6px] left-[37px] h-[13px] w-[5px] bg-[#444]" />
      <div className="absolute -top-[3px] left-[50px] h-[7px] w-px bg-[#555]" />
    </div>
    <span className="ml-[5px] w-[9px] leading-none">+</span>
    <span className="ml-[12px]">80%</span>
  </div>
);

export default function App() {
  return (
    <div
      lang="zh-CN"
      className="flex h-[1044px] w-[1924px] overflow-hidden font-['Noto_Sans','Noto_Sans_CJK_SC',sans-serif]"
    >
      <div className="flex w-[1919px] shrink-0 flex-col">
        <div className="bg-[#2b579a]">
          <TitleBar />
          <TabsRow />
        </div>
        <Ribbon />
        <div className="h-px bg-[#c6c6c6]" />
        <InfoBar />
        <Body />
        <StatusBar />
        <div className="flex h-[6px] bg-[#253c47]">
          <div className="ml-[292px] w-[48px] bg-[#b07a50]" />
          <div className="ml-[442px] w-[48px] bg-[#4b5b62]" />
        </div>
      </div>
      <div className="w-[5px] bg-gradient-to-b from-[#69a8e8] via-[#b7dbd8] to-[#5f9a9e]" />
    </div>
  );
}
